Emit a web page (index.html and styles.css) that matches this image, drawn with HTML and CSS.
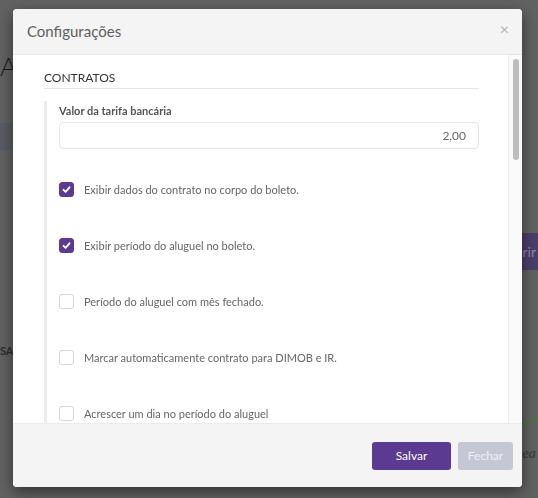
FILE: index.html
```html
<!DOCTYPE html>
<html lang="pt-BR">

<head>
    <meta charset="UTF-8">
    <meta name="viewport" content="width=device-width, initial-scale=1.0">
    <title>Configurações</title>
    <link rel="stylesheet" href="styles.css">
</head>

<body>
    <div class="page">
        <h1 class="page-title">A</h1>
        <div class="page-tabs"></div>
        <div class="page-action"><button class="btn-open">rir</button></div>
        <div class="page-caption">SA</div>
        <div class="page-chart">
            <svg width="22" height="14" viewBox="0 0 22 14">
                <path d="M0 12 L5 9 L8 11 L13 5 L16 7 L22 1" fill="none" stroke="#4d7a35" stroke-width="1.5"/>
            </svg>
        </div>
        <div class="page-note">ea</div>
    </div>

    <div class="modal">
        <div class="modal-header">
            <h4 class="modal-title">Configurações</h4>
            <button class="close">&times;</button>
        </div>
        <div class="modal-main">
            <div class="modal-body">
                <h5 class="section-title">CONTRATOS</h5>
                <div class="group">
                    <label class="field-label" for="tarifa">Valor da tarifa bancária</label>
                    <input class="field-input" id="tarifa" type="text" value="2,00">

                    <label class="check">
                        <span class="box checked">
                            <svg width="15" height="15" viewBox="0 0 15 15"><path d="M4.5 7.8 L6.6 9.8 L10.5 5.3" fill="none" stroke="#fff" stroke-width="1.8" stroke-linecap="round" stroke-linejoin="round"/></svg>
                        </span>
                        Exibir dados do contrato no corpo do boleto.
                    </label>
                    <label class="check">
                        <span class="box checked">
                            <svg width="15" height="15" viewBox="0 0 15 15"><path d="M4.5 7.8 L6.6 9.8 L10.5 5.3" fill="none" stroke="#fff" stroke-width="1.8" stroke-linecap="round" stroke-linejoin="round"/></svg>
                        </span>
                        Exibir período do aluguel no boleto.
                    </label>
                    <label class="check">
                        <span class="box"></span>
                        Período do aluguel com mês fechado.
                    </label>
                    <label class="check">
                        <span class="box"></span>
                        Marcar automaticamente contrato para DIMOB e IR.
                    </label>
                    <label class="check">
                        <span class="box"></span>
                        Acrescer um dia no período do aluguel
                    </label>
                </div>
            </div>
            <div class="scrollbar">
                <div class="scroll-thumb"></div>
            </div>
        </div>
        <div class="modal-footer">
            <button class="btn btn-primary">Salvar</button>
            <button class="btn btn-muted">Fechar</button>
        </div>
    </div>
</body>

</html>
```

FILE: styles.css
```css
* {
    box-sizing: border-box;
    font-family: 'Lato', 'Liberation Sans', sans-serif;
}

body {
    margin: 0;
    height: 100vh;
    overflow: hidden;
    background-color: #626262;
}

/* page behind the modal (already dimmed) */

.page {
    display: flex;
    flex-direction: column;
    height: 100vh;
}

.page-title {
    margin: 53px 0 0 0;
    font-size: 26px;
    line-height: 26px;
    font-weight: 300;
    color: #1c1c1c;
}

.page-tabs {
    margin-top: 44px;
    width: 300px;
    height: 27px;
    background-color: #5b5b65;
}

.page-action {
    margin-top: 83px;
    display: flex;
    justify-content: flex-end;
}

.btn-open {
    width: 70px;
    height: 37px;
    margin-right: -4px;
    border: none;
    padding: 0 6px 0 0;
    text-align: right;
    font-size: 14px;
    background-color: #4a3f6c;
    color: #9088ad;
}

.page-caption {
    margin-top: 75px;
    font-size: 11px;
    line-height: 12px;
    font-weight: 700;
    color: #2c2c2c;
}

.page-chart {
    margin-top: 58px;
    display: flex;
    justify-content: flex-end;
}

.page-note {
    margin-top: 15px;
    padding-right: 2px;
    text-align: right;
    font-size: 14px;
    font-style: italic;
    color: #3c3c3c;
}

/* modal */

.modal {
    position: fixed;
    left: 13px;
    top: 9px;
    width: 509px;
    height: 478px;
    display: flex;
    flex-direction: column;
    background-color: #fff;
    border-radius: 4px;
    overflow: hidden;
    box-shadow: 0 5px 15px rgba(0, 0, 0, 0.5);
}

.modal-header {
    flex: none;
    height: 46px;
    display: flex;
    align-items: center;
    justify-content: space-between;
    padding: 0 13px 2px 14px;
    background-color: #f4f4f4;
    border-bottom: 1px solid #e6e6e6;
}

.modal-title {
    margin: 0;
    font-size: 15px;
    font-weight: 400;
    color: #606060;
}

.close {
    border: none;
    background: transparent;
    padding: 0;
    margin-bottom: 4px;
    font-size: 16px;
    line-height: 16px;
    color: #b3b3b3;
    cursor: pointer;
}

.modal-main {
    flex: 1;
    min-height: 0;
    display: flex;
}

.modal-body {
    flex: 1;
    overflow: hidden;
    padding: 15px 29px 0 31px;
}

.scrollbar {
    flex: none;
    width: 14px;
    padding: 4px 3px 0 4px;
    background-color: #fafafa;
    border-left: 1px solid #efefef;
}

.scroll-thumb {
    height: 101px;
    border-radius: 4px;
    background-color: #bdbdbd;
}

.section-title {
    margin: 0 0 12px 0;
    padding-bottom: 2px;
    font-size: 12px;
    line-height: 16px;
    font-weight: 400;
    color: #333;
    border-bottom: 1px solid #e6e6e6;
}

.group {
    display: flex;
    flex-direction: column;
    align-items: flex-start;
    border-left: 3px solid #ececec;
    padding: 2px 0 40px 12px;
}

.field-label {
    font-size: 11px;
    line-height: 16px;
    font-weight: 700;
    color: #555;
}

.field-input {
    width: 100%;
    height: 27px;
    margin-top: 3px;
    margin-bottom: 32px;
    padding: 0 12px;
    border: 1px solid #e6e6e6;
    border-radius: 4px;
    text-align: right;
    font-size: 12px;
    color: #666;
    outline: none;
}

.check {
    display: flex;
    align-items: center;
    gap: 10px;
    height: 16px;
    margin-bottom: 40px;
    font-size: 11px;
    color: #666;
    cursor: pointer;
}

.check:last-child {
    margin-bottom: 0;
}

.box {
    width: 15px;
    height: 15px;
    flex: none;
    border: 1px solid #d6d6d6;
    border-radius: 3px;
    background-color: #fff;
}

.box svg {
    display: block;
    margin: -1px;
}

.box.checked {
    background-color: #5b3a91;
    border-color: #5b3a91;
}

.modal-footer {
    flex: none;
    height: 64px;
    display: flex;
    justify-content: flex-end;
    align-items: center;
    gap: 7px;
    padding: 0 9px 0 0;
    background-color: #f4f4f4;
    border-top: 1px solid #ebebeb;
}

.btn {
    height: 28px;
    border: none;
    border-radius: 3px;
    font-size: 12px;
    cursor: pointer;
}

.btn-primary {
    width: 79px;
    background-color: #5b3a91;
    color: #fff;
}

.btn-muted {
    width: 55px;
    background-color: #c5c7d4;
    color: #eef0f6;
}
```
